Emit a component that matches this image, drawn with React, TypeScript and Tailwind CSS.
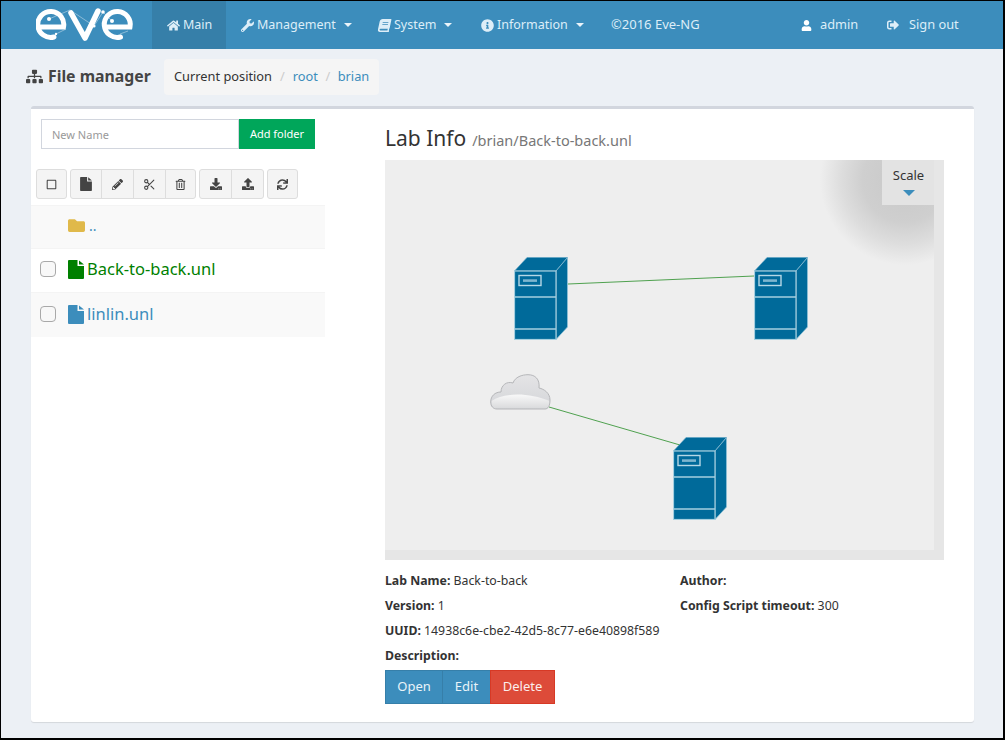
import React from "react";
import { FaHome, FaWrench, FaBook, FaInfoCircle, FaUser, FaSignOutAlt, FaSitemap, FaRegSquare, FaPencilAlt, FaRegTrashAlt, FaDownload, FaUpload, FaSync, FaFolder } from "react-icons/fa";
import { LuScissors } from "react-icons/lu";

const Caret = () => <span className="ml-[5px] inline-block h-0 w-0 border-x-[4px] border-t-[4px] border-x-transparent border-t-[#eaf4fa]" />;

function NavItem({ w, icon, label, caret, active }: { w: string; icon: React.ReactNode; label: string; caret?: boolean; active?: boolean }) {
  return (
    <div className={`flex h-full items-center gap-[3px] pl-[15px] text-[12.5px] text-[#ddeef8] ${w} ${active ? "bg-[#367fa9]" : ""}`}>
      {icon}
      <span>{label}</span>
      {caret && <Caret />}
    </div>
  );
}

function Logo() {
  const e = "M3.5 20 H27.5 A13 13 0 1 0 18 30";
  return (
    <svg width="100" height="36" viewBox="0 0 100 36" className="ml-[35px]" fill="none">
      <path d="M13 12 L34 3 L58 19 L67 5 L76 14 M20 27 L30 22 M84 27 L92 24" stroke="#ffffff" strokeOpacity="0.5" strokeWidth="0.8" />
      <path d={e} stroke="#ffffff" strokeWidth="5" strokeLinecap="round" />
      <path d="M35 6 L49 31 L62 4" stroke="#ffffff" strokeWidth="5.5" strokeLinecap="round" strokeLinejoin="round" />
      <path d={e} transform="translate(66.5 0)" stroke="#ffffff" strokeWidth="5" strokeLinecap="round" />
      <circle cx="13" cy="12" r="2" fill="#ffffff" />
      <circle cx="67" cy="5" r="1.8" fill="#ffffff" />
      <circle cx="58" cy="19" r="1.6" fill="#ffffff" />
      <circle cx="76" cy="14" r="2" fill="#ffffff" />
      <circle cx="20" cy="27" r="1.2" fill="#ffffff" />
    </svg>
  );
}

function FileIcon({ body, corner, w = 16, h = 19 }: { body: string; corner: string; w?: number; h?: number }) {
  return (
    <svg width={w} height={h} viewBox="0 0 16 19" className="shrink-0">
      <path d="M0 1 Q0 0 1 0 H9.5 V6 H16 V18 Q16 19 15 19 H1 Q0 19 0 18 Z" fill={body} />
      <path d="M11 0.5 L16 4.6 H11 Z" fill={corner} />
    </svg>
  );
}

function ToolBtn({ w, children, first, last }: { w: string; children: React.ReactNode; first?: boolean; last?: boolean }) {
  return (
    <div className={`flex h-[30px] items-center justify-center border border-[#dddddd] bg-[#f4f4f4] text-[#444444] ${w} ${first ? "rounded-l-[3px]" : "-ml-px"} ${last ? "rounded-r-[3px]" : ""}`}>
      {children}
    </div>
  );
}

function Checkbox() {
  return <span className="h-[16px] w-[16px] shrink-0 rounded-[4px] border border-[#a9a9a9] bg-[#f8f8f8]" />;
}

function Server({ className }: { className: string }) {
  return (
    <svg width="54" height="83" viewBox="0 0 54 83" className={`absolute ${className}`}>
      <path d="M0.5 14 L13 0.5 H53.5 L42 14 Z" fill="#006a9a" stroke="#5fa4c3" strokeWidth="0.7" />
      <path d="M42 14 L53.5 0.5 V70 L42 82.5 Z" fill="#006a9a" stroke="#8fc0d6" strokeWidth="0.8" />
      <rect x="0.5" y="14" width="41.5" height="68.5" fill="#006a9a" stroke="#a5cfe0" strokeWidth="1.2" />
      <path d="M0.5 40 H42 M0.5 72 H42" stroke="#a5cfe0" strokeWidth="1.4" />
      <rect x="5" y="18.5" width="22" height="10" fill="#006a9a" stroke="#b5d8e6" strokeWidth="1.4" />
      <rect x="9" y="22.3" width="14" height="2.6" fill="#7eb6cf" />
    </svg>
  );
}

function Cloud() {
  const outline = "M7 35 C3 35 0.7 32 0.7 28 C0.7 22 5 18 11 18 C11 11 17 7 23 9 C25 3 32 0.7 38 0.7 C45 0.7 50 5 49 14 C54 15 60 19 60 26 C60 32 58 35 55 35 Z";
  return (
    <svg width="61" height="36" viewBox="0 0 61 36" className="absolute left-[105px] top-[214px]">
      <defs>
        <linearGradient id="cl" x1="0" y1="0" x2="0" y2="1">
          <stop offset="0" stopColor="#e4e4e6" />
          <stop offset="1" stopColor="#d4d5d8" />
        </linearGradient>
        <linearGradient id="cl2" x1="0" y1="0" x2="0" y2="1">
          <stop offset="0" stopColor="#f8f8f8" />
          <stop offset="1" stopColor="#d9dadc" />
        </linearGradient>
      </defs>
      <path d={outline} fill="url(#cl)" />
      <path d="M1.5 27 C15 18 40 19 59.5 27 C60 32 58 34.5 55 34.5 H7 C3 34.5 1.5 31 1.5 27 Z" fill="url(#cl2)" />
      <path d={outline} fill="none" stroke="#b5b6b9" strokeWidth="1" />
    </svg>
  );
}

const rows: [string, string][] = [
  ["Lab Name:", "Back-to-back"],
  ["Version:", "1"],
  ["UUID:", "14938c6e-cbe2-42d5-8c77-e6e40898f589"],
  ["Description:", ""],
];
const rows2: [string, string][] = [
  ["Author:", ""],
  ["Config Script timeout:", "300"],
];

function InfoLine({ k, v }: { k: string; v: string }) {
  return (
    <div className="h-[25px] leading-[20px] whitespace-nowrap">
      <b className="font-bold">{k}</b> {v}
    </div>
  );
}

export default function App() {
  return (
    <div className="flex h-[740px] w-[1005px] flex-col overflow-hidden border-t border-r-2 border-b-2 border-l border-black bg-[#ecf0f5] font-['Noto_Sans',sans-serif] text-[#333333]">
      <header className="flex h-[48px] shrink-0 items-center bg-[#3c8dbc]">
        <div className="flex h-full w-[151px] items-center"><Logo /></div>
        <NavItem w="w-[74px]" active icon={<FaHome size={13} />} label="Main" />
        <NavItem w="w-[137px]" caret icon={<FaWrench size={13} />} label="Management" />
        <NavItem w="w-[103px]" caret icon={<FaBook size={13} className="-skew-x-12" />} label="System" />
        <NavItem w="w-[130px]" caret icon={<FaInfoCircle size={13} />} label="Information" />
        <div className="w-[120px] pl-[15px] text-[13px] text-[#ddeef8]">©2016 Eve-NG</div>
        <div className="ml-auto flex h-full items-center pr-[31px] text-[12.8px] text-[#ddeef8]">
          <div className="flex w-[86px] items-center gap-[8px] pl-[15px]"><FaUser size={11} className="text-white" /><span>admin</span></div>
          <div className="flex w-[100px] items-center gap-[10px] pl-[15px]"><FaSignOutAlt size={12} /><span>Sign out</span></div>
        </div>
      </header>

      <div className="flex h-[57px] shrink-0 items-start pl-[25px] pt-[10px]">
        <div className="flex h-[35px] w-[138px] items-center gap-[5px] text-[15.8px] font-bold text-[#444444]"><FaSitemap size={17} /><span>File manager</span></div>
        <div className="flex h-[36px] items-center rounded-[4px] bg-[#f5f5f5] px-[10px] text-[12.8px]">
          <span>Current position</span>
          <span className="px-[8px] text-[#cccccc]">/</span>
          <span className="text-[#3c8dbc]">root</span>
          <span className="px-[7.5px] text-[#cccccc]">/</span>
          <span className="text-[#3c8dbc]">brian</span>
        </div>
      </div>

      <main className="mb-[16px] ml-[30px] mr-[29px] flex flex-1 rounded-[3px] border-t-[3px] border-[#d2d6de] bg-white shadow-[0_1px_1px_rgba(0,0,0,0.1)]">
        <section className="w-[294px] shrink-0">
          <div className="ml-[10px] mt-[10px] flex h-[30px] w-[274px]">
            <div className="flex flex-1 items-center border border-[#d2d6de] pl-[10px] pt-[2px] text-[11px] text-[#999999]">New Name</div>
            <div className="flex w-[76px] items-center justify-center bg-[#00a65a] text-[11px] text-white">Add folder</div>
          </div>
          <div className="ml-[5px] mt-[20px] flex gap-[3px]">
            <div className="flex">
              <ToolBtn w="w-[31px]" first last><FaRegSquare size={11} /></ToolBtn>
            </div>
            <div className="flex">
              <ToolBtn w="w-[32px]" first><FileIcon body="#444444" corner="#444444" w={12} h={14} /></ToolBtn>
              <ToolBtn w="w-[33px]"><FaPencilAlt size={11} /></ToolBtn>
              <ToolBtn w="w-[33px]"><LuScissors size={13} /></ToolBtn>
              <ToolBtn w="w-[31px]" last><FaRegTrashAlt size={11} /></ToolBtn>
            </div>
            <div className="flex">
              <ToolBtn w="w-[33px]" first><FaDownload size={12} /></ToolBtn>
              <ToolBtn w="w-[33px]" last><FaUpload size={12} /></ToolBtn>
            </div>
            <div className="flex">
              <ToolBtn w="w-[31px]" first last><FaSync size={11} /></ToolBtn>
            </div>
          </div>
          <div className="mt-[6px]">
            <div className="flex h-[43px] items-center border-t border-[#f4f4f4] bg-[#f9f9f9] pb-[4px] pl-[37px]">
              <FaFolder size={17} className="text-[#e0b94a]" />
              <span className="ml-[4px] text-[14px] text-[#3c8dbc]">..</span>
            </div>
            <div className="flex h-[44px] items-center border-t border-[#f4f4f4] pb-[3px] pl-[9px] text-[16.5px] text-[#008000]">
              <Checkbox />
              <span className="ml-[12px] flex items-center gap-[3px]"><FileIcon body="#008000" corner="#008000" />Back-to-back.unl</span>
            </div>
            <div className="flex h-[45px] items-center border-t border-[#f4f4f4] bg-[#f9f9f9] pb-[2px] pl-[9px] text-[16.5px] text-[#3c8dbc]">
              <Checkbox />
              <span className="ml-[12px] flex items-center gap-[3px]"><FileIcon body="#3c8dbc" corner="#3c8dbc" />linlin.unl</span>
            </div>
          </div>
        </section>

        <section className="ml-[60px] w-[559px] shrink-0">
          <div className="flex h-[51px] items-center pt-[8px]">
            <span className="text-[21px]">Lab Info</span>
            <span className="ml-[6px] pt-[5px] text-[14.5px] text-[#777777]">/brian/Back-to-back.unl</span>
          </div>
          <div className="relative h-[400px] w-[559px] overflow-hidden bg-[#e6e6e6]">
            <div className="relative h-[390px] w-[549px] overflow-hidden bg-[#eeeeee]">
              <div className="absolute left-[435px] top-[-65px] h-[170px] w-[170px] bg-[radial-gradient(circle_closest-side,#c8c8c8_0%,#cfcfcf_50%,#dddddd_75%,#eeeeee_100%)]" />
              <svg width="549" height="390" className="absolute left-0 top-0">
                <path d="M183 124 L369 116" stroke="#0a800a" strokeWidth="0.7" fill="none" />
                <path d="M164 247 L295 285" stroke="#0a800a" strokeWidth="0.7" fill="none" />
              </svg>
              <Server className="left-[129px] top-[97px]" />
              <Server className="left-[369px] top-[97px]" />
              <Server className="left-[288px] top-[277px]" />
              <Cloud />
              <div className="absolute right-0 top-0 flex h-[45px] w-[52px] flex-col items-center bg-[#e3e3e3] pl-px pt-[7px] text-[13px] leading-[16px]">
                <span>Scale</span>
                <span className="mt-[7px] h-0 w-0 border-x-[6px] border-t-[6px] border-x-transparent border-t-[#3c8dbc]" />
              </div>
            </div>
          </div>
          <div className="mt-[11px] flex text-[12.3px]">
            <div className="w-[295px]">{rows.map(([k, v]) => <InfoLine key={k} k={k} v={v} />)}</div>
            <div>{rows2.map(([k, v]) => <InfoLine key={k} k={k} v={v} />)}</div>
          </div>
          <div className="-mt-px flex h-[34px] text-[13px] text-[#e8f3f9]">
            <div className="flex w-[58px] items-center justify-center border border-[#367fa9] bg-[#3c8dbc]">Open</div>
            <div className="-ml-px flex w-[49px] items-center justify-center border border-[#367fa9] bg-[#3c8dbc]">Edit</div>
            <div className="-ml-px flex w-[65px] items-center justify-center border border-[#d73925] bg-[#dd4b39] text-[#fbeeec]">Delete</div>
          </div>
        </section>
      </main>
    </div>
  );
}
